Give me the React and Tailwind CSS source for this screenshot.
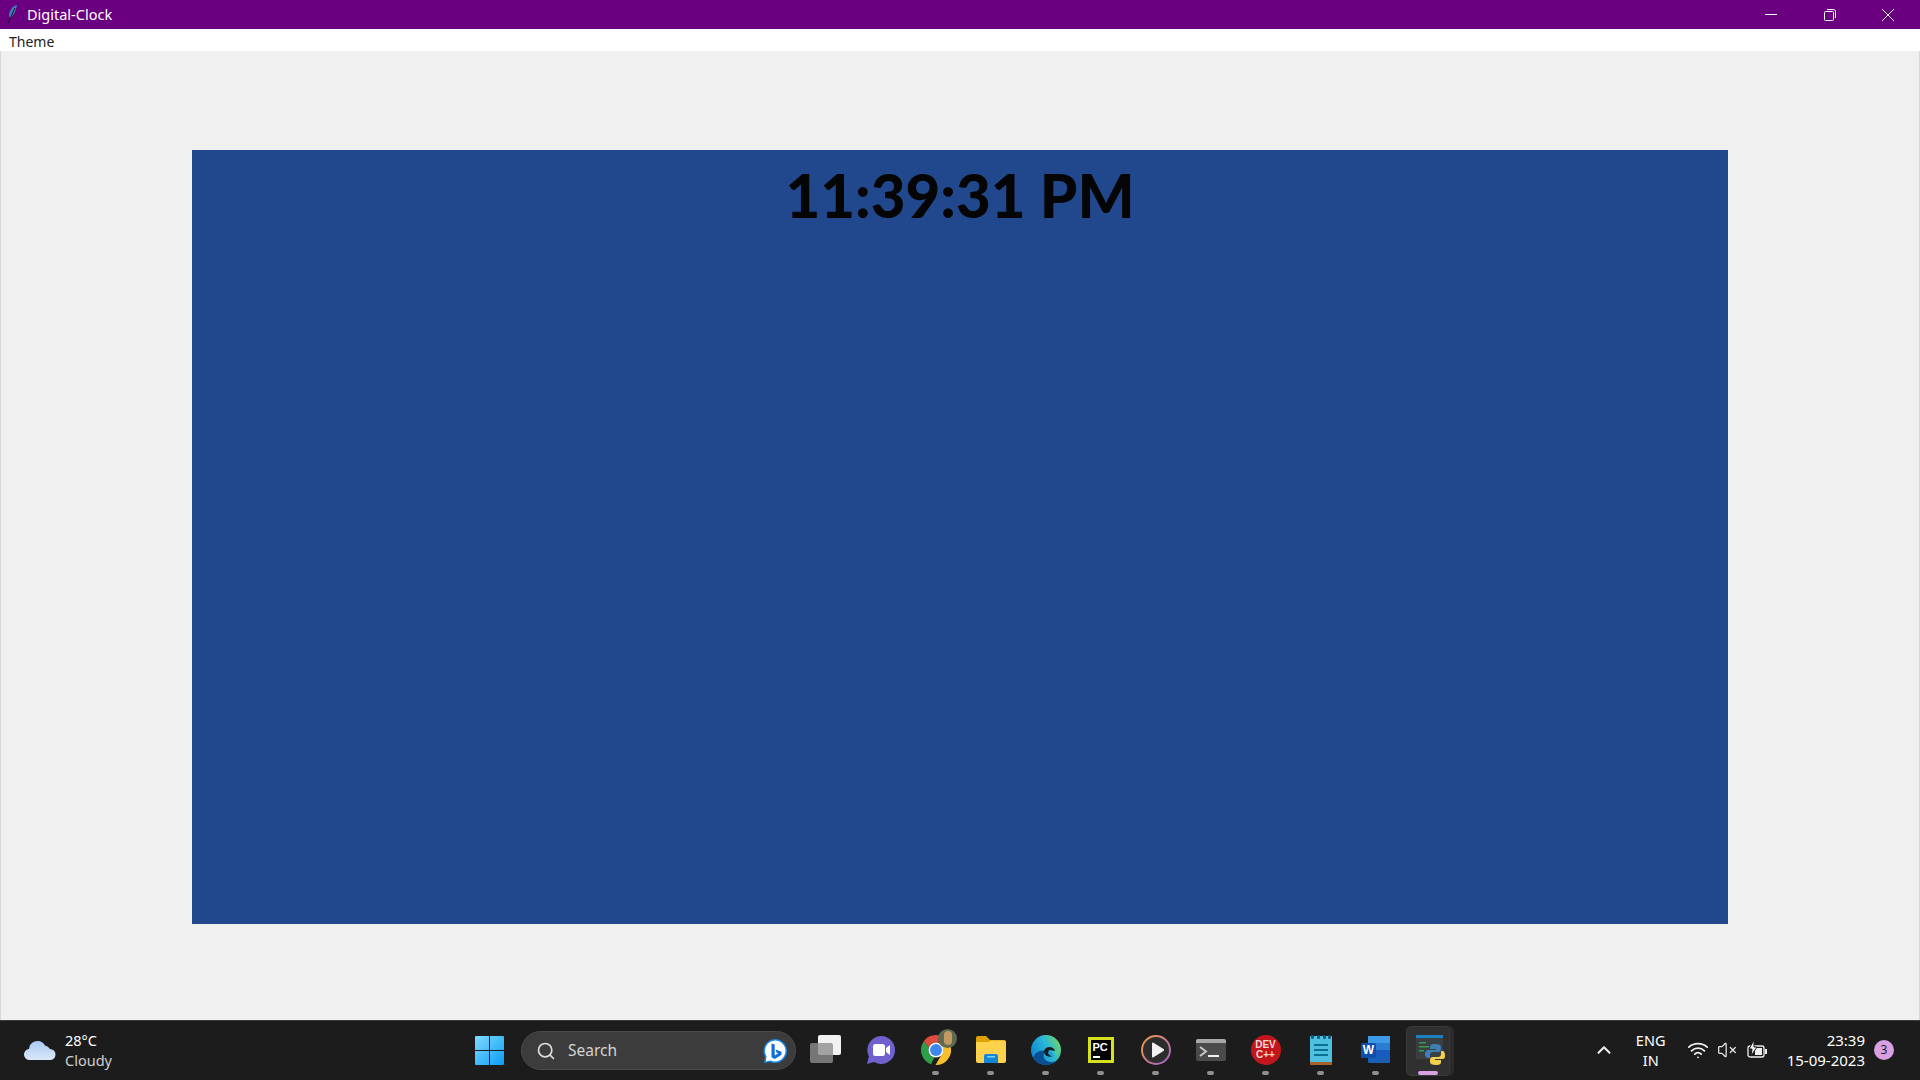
import React from 'react'
import { Search, ChevronUp, Wifi, VolumeX } from 'lucide-react'

const Slot = ({ children, dot = true }) => (
  <div className="relative w-[55px] h-full flex items-center justify-center pb-[2px]">
    {children}
    {dot && <span className="absolute bottom-[5px] left-[24px] w-[7px] h-[4px] rounded-full bg-[#8f8f8f]" />}
  </div>
)

const WindowsLogo = () => (
  <svg width="29" height="29" viewBox="0 0 29 29">
    <defs>
      <linearGradient id="win" x1="0" y1="0" x2="1" y2="1">
        <stop offset="0" stopColor="#7fdcff" />
        <stop offset="1" stopColor="#0a9bf5" />
      </linearGradient>
    </defs>
    <path fill="url(#win)" d="M1 0h13v14H0V1a1 1 0 0 1 1-1zM15 0h13a1 1 0 0 1 1 1v13H15zM0 15h14v14H1a1 1 0 0 1-1-1zM15 15h14v13a1 1 0 0 1-1 1H15z" />
  </svg>
)

const BingIcon = () => (
  <svg width="26" height="26" viewBox="0 0 26 26">
    <path fill="#1488e8" d="M13 1a12 12 0 1 1-5 22.900L2 25l1-6A12 12 0 0 1 13 1z" />
    <path fill="#fff" d="M13 2.400a10.600 10.600 0 1 1-4.600 20.200L3.800 23.400l.8-4.800A10.600 10.600 0 0 1 13 2.400z" />
    <path fill="#0f6fd8" d="M9.500 5.500l3.200 1.100v10.800l3.600-2.100-1.800-.9-1-2.800 6 2.100v3L12.700 21l-3.200-1.800z" />
  </svg>
)

const TaskView = () => (
  <svg width="32" height="29" viewBox="0 0 32 29">
    <rect x="8" y="0" width="23" height="20" rx="2" fill="#f2f2f2" />
    <rect x="0" y="8" width="23" height="20" rx="2" fill="#8d8d8d" fillOpacity="0.800" />
  </svg>
)

const ChatIcon = () => (
  <svg width="30" height="30" viewBox="0 0 30 30">
    <path fill="#6f62cf" d="M15 1a14 14 0 1 1-7 26.100L1 29l1.900-7.500A14 14 0 0 1 15 1z" />
    <rect x="7" y="9" width="12" height="12" rx="2.500" fill="#fff" />
    <path fill="#fff" d="M20 13l4-3v10l-4-3z" />
  </svg>
)

const ChromeIcon = () => (
  <div className="relative w-[30px] h-[30px] mt-[1px]">
    <svg width="30" height="30" viewBox="0 0 30 30">
      <path fill="#dd4b3e" d="M15 0a15 15 0 0 1 13 7.500H15a7.500 7.500 0 0 0-7 5L2.700 6.400A15 15 0 0 1 15 0z" />
      <path fill="#2f9e48" d="M2.700 6.400L8 12.500a7.500 7.500 0 0 0 5.500 9.800L10 29.200A15 15 0 0 1 2.700 6.400z" />
      <path fill="#f6c02c" d="M28 7.500A15 15 0 0 1 14.500 30l5.500-9.500A7.500 7.500 0 0 0 20 9.500z" />
      <circle cx="15" cy="15" r="7.500" fill="#fff" />
      <circle cx="15" cy="15" r="6" fill="#3f87ee" />
    </svg>
    <div className="absolute -top-[6px] left-[17px] w-[19px] h-[19px] rounded-full bg-[#5f6a50] overflow-hidden">
      <div className="w-[8px] h-[14px] ml-[6px] mt-[2px] rounded-full bg-[#c49a63]" />
    </div>
  </div>
)

const FolderIcon = () => (
  <svg width="30" height="27" viewBox="0 0 30 27">
    <path fill="#e0a106" d="M0 2a2 2 0 0 1 2-2h8l4 4h14a2 2 0 0 1 2 2v3H0z" />
    <path fill="#ffd24d" d="M0 6h12l3-1.500h13a2 2 0 0 1 2 2V25a2 2 0 0 1-2 2H2a2 2 0 0 1-2-2z" />
    <path fill="#1287d8" d="M8 27v-7a2 2 0 0 1 2-2h10a2 2 0 0 1 2 2v7z" />
    <rect x="11" y="20" width="8" height="1.500" fill="#7fd0f5" />
  </svg>
)

const EdgeIcon = () => (
  <svg width="30" height="30" viewBox="0 0 30 30">
    <defs>
      <linearGradient id="edgeTop" x1="0" y1="0.800" x2="1" y2="0.300">
        <stop offset="0" stopColor="#0c7fd0" />
        <stop offset="0.600" stopColor="#2bb7d8" />
        <stop offset="1" stopColor="#6bd56a" />
      </linearGradient>
    </defs>
    <circle cx="15" cy="15" r="15" fill="url(#edgeTop)" />
    <path fill="#0a4f92" d="M2 23c3 5 8 7 13 7 4 0 8-2 10-4-5 2-10 1-12-3-1-3 0-6 3-7-6-2-12 1-14 7z" />
    <path fill="#1b1b1b" d="M15 13c3-2 8-1 9 3 1 2 0 4-2 5-2 1-4 1-6 0-3-1-4-6-1-8z" />
    <path fill="url(#edgeTop)" d="M19 15c2 0 3 1 5 1 2 0 2 2 1 4-1 1-3 2-5 1-2-.5-3-2-3-3 0-2 1-3 2-3z" />
  </svg>
)

const PycharmIcon = () => (
  <div className="w-[26px] h-[26px] bg-black border-[3px] border-[#d6e21f] flex flex-col px-[2px] pt-[1px]">
    <span className="font-['Liberation_Sans'] font-bold text-[11px] leading-[12px] text-white">PC</span>
    <span className="mt-[3px] w-[7px] h-[2px] bg-white" />
  </div>
)

const PlayIcon = () => (
  <svg width="30" height="30" viewBox="0 0 30 30">
    <defs>
      <linearGradient id="ring" x1="0" y1="0" x2="1" y2="1">
        <stop offset="0" stopColor="#f59a42" />
        <stop offset="1" stopColor="#a05fd0" />
      </linearGradient>
    </defs>
    <circle cx="15" cy="15" r="14" fill="#2c2c2c" stroke="url(#ring)" strokeWidth="2" />
    <path fill="#f2f2f2" d="M11 8.500a1 1 0 0 1 1.500-.8l10 6.400a1 1 0 0 1 0 1.800l-10 6.400A1 1 0 0 1 11 21.500z" />
  </svg>
)

const TerminalIcon = () => (
  <svg width="30" height="22" viewBox="0 0 30 22">
    <rect width="30" height="22" rx="2" fill="#4b4b4b" />
    <path fill="#a8a8a8" d="M2 0h26a2 2 0 0 1 2 2v2H0V2a2 2 0 0 1 2-2z" />
    <path fill="none" stroke="#c8c8c8" strokeWidth="2" d="M4 8l6 4.500L4 17" />
    <rect x="12" y="16" width="11" height="2" fill="#f0f0f0" />
  </svg>
)

const DevCpp = () => (
  <div className="w-[30px] h-[30px] rounded-full bg-[#c3161c] flex flex-col items-center justify-center font-['Liberation_Sans'] font-bold text-[10px] leading-[10px] text-[#f3d6d6]">
    <span>DEV</span>
    <span>C++</span>
  </div>
)

const NotepadIcon = () => (
  <svg width="22" height="30" viewBox="0 0 22 30">
    <rect y="1" width="22" height="29" rx="1" fill="#4fbfe0" />
    <rect y="27" width="22" height="3" fill="#a9622b" />
    <rect y="0" x="1" width="3" height="4" rx="1.500" fill="#0d5f80" />
    <rect y="0" x="7" width="3" height="4" rx="1.500" fill="#0d5f80" />
    <rect y="0" x="13" width="3" height="4" rx="1.500" fill="#0d5f80" />
    <rect y="0" x="18" width="3" height="4" rx="1.500" fill="#0d5f80" />
    <rect x="4" y="9" width="14" height="2" fill="#0d6f94" />
    <rect x="4" y="14" width="14" height="2" fill="#0d6f94" />
    <rect x="4" y="19" width="14" height="2" fill="#0d6f94" />
  </svg>
)

const WordIcon = () => (
  <div className="relative w-[29px] h-[27px]">
    <svg width="29" height="27" viewBox="0 0 29 27">
      <rect x="7" width="22" height="27" rx="1.500" fill="#1a5fb4" />
      <rect x="7" width="22" height="7" fill="#3d9be9" />
      <rect x="7" y="7" width="22" height="7" fill="#2b7cd3" />
      <rect x="7" y="14" width="22" height="7" fill="#185abd" />
      <rect x="0" y="7" width="15" height="15" rx="1.500" fill="#0f4fa8" />
    </svg>
    <span className="absolute left-[1px] top-[7px] w-[13px] text-center font-['Liberation_Sans'] font-bold text-[12px] leading-[15px] text-white">W</span>
  </div>
)

const PythonIdle = () => (
  <svg width="29" height="30" viewBox="0 0 29 30">
    <rect width="27" height="24" fill="#3a3f44" />
    <rect width="27" height="3" fill="#1c7fc0" />
    <rect x="3" y="7" width="7" height="1.500" fill="#3d9a4a" />
    <rect x="3" y="11" width="10" height="1.500" fill="#3d9a4a" />
    <rect x="3" y="15" width="5" height="1.500" fill="#3d9a4a" />
    <path fill="#3f7fb5" d="M19 9c-4 0-5 1-5 3v2h6v1h-8c-2 0-3 2-3 4s1 4 3 4h2v-3c0-2 1-3 3-3h5c2 0 3-1 3-3v-2c0-2-2-3-6-3z" />
    <path fill="#f2cf4c" d="M20 30c4 0 5-1 5-3v-2h-6v-1h8c2 0 2-2 2-4s-1-4-2-4h-2v3c0 2-1 3-3 3h-5c-2 0-3 1-3 3v2c0 2 2 3 6 3z" />
  </svg>
)

const CloudIcon = () => (
  <svg width="32" height="21" viewBox="0 0 32 21">
    <defs>
      <linearGradient id="cloud" x1="0" y1="0" x2="0" y2="1">
        <stop offset="0" stopColor="#a9c9f2" />
        <stop offset="1" stopColor="#dbe8fa" />
      </linearGradient>
    </defs>
    <path fill="url(#cloud)" d="M6 20a5.500 5.500 0 0 1-1-11 8.500 8.500 0 0 1 16-3.500A7 7 0 0 1 26 9a5.500 5.500 0 0 1 0 11z" />
  </svg>
)

const BatteryIcon = () => (
  <svg width="21" height="20" viewBox="0 0 21 20" fill="none">
    <rect x="1" y="6" width="16" height="11" rx="2" stroke="#f0f0f0" strokeWidth="1.300" />
    <rect x="8" y="8" width="7" height="7" fill="#f0f0f0" />
    <rect x="18" y="9" width="2" height="5" fill="#f0f0f0" />
    <path fill="#f0f0f0" stroke="#1c1c1c" strokeWidth="1" d="M7 0L2 9h3l-1 7 6-9H7z" />
  </svg>
)

export default function App() {
  return (
    <div className="w-[1920px] h-[1080px] flex flex-col overflow-hidden bg-[#f0f0f0] font-['Noto_Sans',sans-serif]">
      {/* Title bar */}
      <div className="h-[29px] bg-[#6a0080] flex items-center text-white shrink-0">
        <svg className="ml-[7px]" width="11" height="19" viewBox="0 0 11 19">
          <path fill="#3f7fc0" d="M10 0C6 1 2 5 2 11l1 2c4-2 6-8 7-13z" />
          <path stroke="#111" strokeWidth="1" d="M8 3L1 18" />
        </svg>
        <span className="ml-[9px] text-[14.500px] leading-none">Digital-Clock</span>
        <div className="ml-auto flex items-center h-full pr-[2px]">
          <div className="w-[58px] flex justify-center">
            <span className="w-[12px] h-[1px] bg-white" />
          </div>
          <div className="w-[59px] flex justify-center">
            <svg width="12" height="12" viewBox="0 0 12 12" fill="none" stroke="#fff">
              <rect x="0.500" y="2.500" width="9" height="9" rx="1" />
              <path d="M3 .5h6.500a2 2 0 0 1 2 2V9" />
            </svg>
          </div>
          <div className="w-[58px] flex justify-center mr-[1px]">
            <svg width="12" height="12" viewBox="0 0 12 12" stroke="#fff">
              <path d="M0 0l12 12M12 0L0 12" />
            </svg>
          </div>
        </div>
      </div>

      {/* Menu bar */}
      <div className="h-[22px] bg-white flex items-center pl-[9px] pt-[4px] shrink-0">
        <span className="text-[14px] leading-none text-[#222]">Theme</span>
      </div>

      {/* Window body */}
      <div className="flex-1 pt-[99px] px-[192px] border-x border-[#d8d8d8]">
        <div className="h-[774px] w-[1536px] -ml-[1px] bg-[#21488d] flex justify-center pt-[13px]">
          <h1 className="font-['Lato',sans-serif] font-black text-[60px] leading-[64px] text-[#050505]">11:39:31 PM</h1>
        </div>
      </div>

      {/* Taskbar */}
      <div className="relative h-[60px] shrink-0 bg-[#1c1c1c] border-t border-[#3a3a3a] flex items-center text-white">
        <div className="w-[475px] shrink-0 flex items-center pl-[24px]">
          <CloudIcon />
          <div className="ml-[9px] -mt-[2px] flex flex-col text-[14.500px] leading-[20px]">
            <span>28°C</span>
            <span className="text-[#cfcfcf]">Cloudy</span>
          </div>
        </div>
        <WindowsLogo />
        <div className="ml-[17px] w-[275px] h-[39px] rounded-full bg-[#3c3c3c] border border-[#4a4a4a] flex items-center pl-[14px] pr-[7px]">
          <Search size={20} strokeWidth={2} className="text-[#dcdcdc]" />
          <span className="ml-[12px] text-[15.500px] text-[#d4d4d4]">Search</span>
          <div className="ml-auto"><BingIcon /></div>
        </div>
        <div className="ml-[2px] flex h-full">
          <Slot dot={false}><TaskView /></Slot>
          <Slot dot={false}><ChatIcon /></Slot>
          <Slot><ChromeIcon /></Slot>
          <Slot><FolderIcon /></Slot>
          <Slot><EdgeIcon /></Slot>
          <Slot><PycharmIcon /></Slot>
          <Slot><PlayIcon /></Slot>
          <Slot><TerminalIcon /></Slot>
          <Slot><DevCpp /></Slot>
          <Slot><NotepadIcon /></Slot>
          <Slot><WordIcon /></Slot>
          <div className="relative w-[55px] h-full flex items-center justify-center pb-[2px]">
            <div className="absolute left-[27px] top-[5px] w-[24px] h-[50px] rounded-[5px] bg-[#2a2a2a]" />
            <div className="absolute left-[3px] top-[5px] w-[44px] h-[50px] rounded-[5px] bg-[#303030] border border-[#3a3a3a]" />
            <div className="relative -ml-[1px]"><PythonIdle /></div>
            <span className="absolute bottom-[5px] left-[15px] w-[20px] h-[4px] rounded-full bg-[#d99fe3]" />
          </div>
        </div>
        <div className="ml-auto flex items-center pr-[26px] -mt-[2px]">
          <ChevronUp size={22} strokeWidth={2.200} className="text-[#eeeeee]" />
          <div className="ml-[18px] w-[36px] flex flex-col items-center text-[14.500px] leading-[20px]">
            <span>ENG</span>
            <span>IN</span>
          </div>
          <Wifi size={22} strokeWidth={2} className="ml-[18px] text-[#f0f0f0]" />
          <VolumeX size={20} strokeWidth={1.500} className="ml-[8px] text-[#e8e8e8]" />
          <div className="ml-[10px]"><BatteryIcon /></div>
          <div className="ml-[19px] flex flex-col items-end text-[15px] leading-[20px]">
            <span>23:39</span>
            <span>15-09-2023</span>
          </div>
          <span className="ml-[9px] w-[20px] h-[20px] rounded-full bg-[#d99fe3] text-[#1c1c1c] text-[12px] flex items-center justify-center">3</span>
        </div>
      </div>
    </div>
  )
}
